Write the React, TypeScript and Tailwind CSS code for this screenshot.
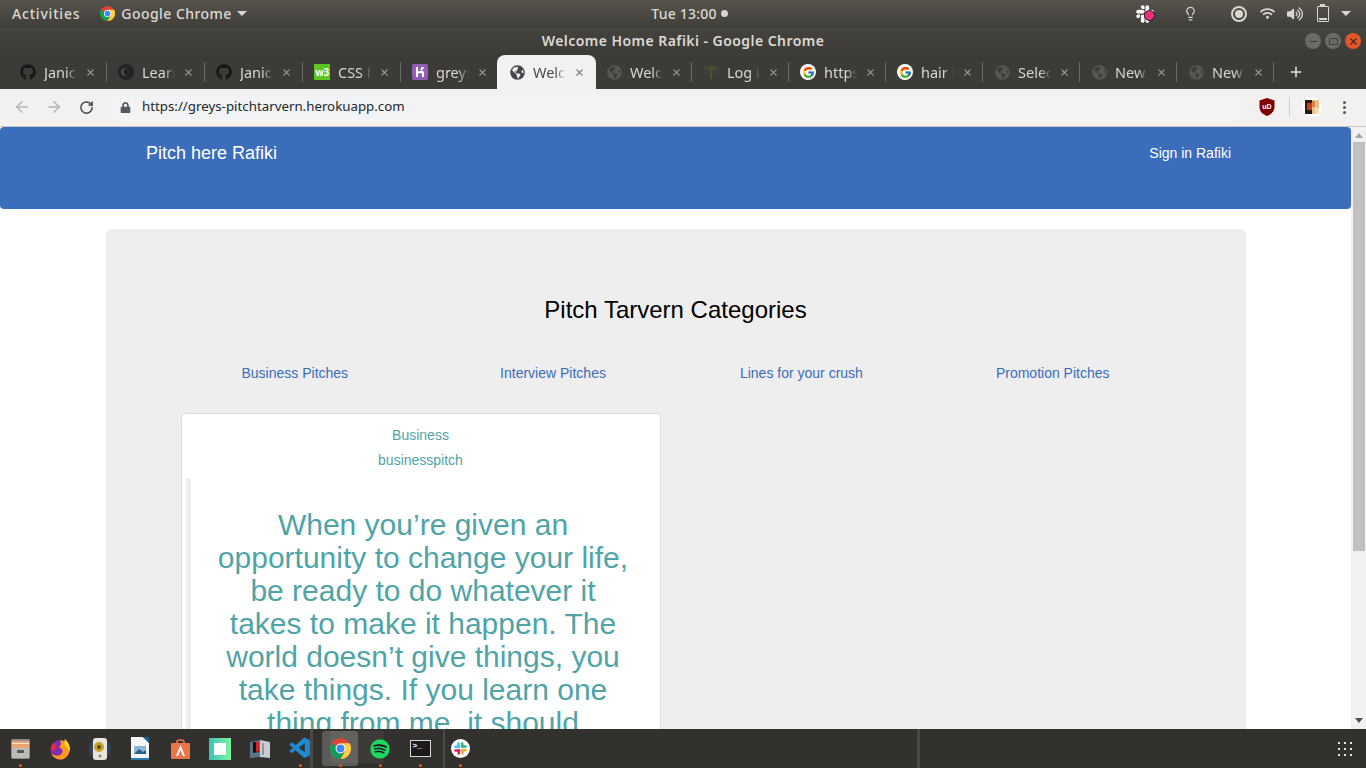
import { ArrowLeft, ArrowRight, RotateCw, X, Plus, Lightbulb, Minus } from "lucide-react";
import { FaGithub, FaGlobeAmericas, FaSpotify, FaSlack, FaLock, FaWifi, FaVolumeUp } from "react-icons/fa";
import { FcGoogle } from "react-icons/fc";
import { VscVscode } from "react-icons/vsc";
import type { ReactNode } from "react";

const ubuntu = "[font-family:'Noto_Sans','Open_Sans',sans-serif]";

function ChromeLogo({ size = 16 }: { size?: number }) {
  return (
    <svg width={size} height={size} viewBox="0 0 32 32">
      <circle cx="16" cy="16" r="16" fill="#db4437" />
      <path d="M16 16 L2.14 8 A16 16 0 0 0 16 32 L22 22 Z" fill="#0f9d58" />
      <path d="M16 8 H29.9 A16 16 0 0 1 16 32 L22.9 20 Z" fill="#ffcd40" />
      <circle cx="16" cy="16" r="7.6" fill="#fff" />
      <circle cx="16" cy="16" r="6" fill="#4285f4" />
    </svg>
  );
}

function GoogleBadge() {
  return (
    <span className="flex h-4 w-4 items-center justify-center rounded-full bg-white">
      <FcGoogle size={13} />
    </span>
  );
}

function LearnIcon() {
  return (
    <svg width="16" height="16" viewBox="0 0 16 16">
      <circle cx="8" cy="8" r="8" fill="#242424" />
      <circle cx="7" cy="8" r="4" fill="#4a4a48" />
      <circle cx="9" cy="8" r="3.4" fill="#242424" />
    </svg>
  );
}

function W3Icon() {
  return (
    <span className="flex h-4 w-4 items-center justify-center bg-[#5ec422] text-[10px] font-bold leading-none tracking-tighter text-white">
      w3
    </span>
  );
}

function HerokuIcon() {
  return (
    <svg width="16" height="16" viewBox="0 0 16 16">
      <rect width="16" height="16" rx="2" fill="#8e5fb5" />
      <path d="M4 3h2v4.500c2-.8 6-1.600 6 1.500v4h-2V9.500c0-1-2-.7-4 .2V13H4Z" fill="#fff" />
      <path d="M9.500 3h2.500c0 1.200-.8 2.200-2.200 3.200H8c.8-1 1.400-2 1.500-3.200Z" fill="#fff" />
    </svg>
  );
}

function PalmIcon() {
  return (
    <svg width="16" height="16" viewBox="0 0 16 16" fill="none" stroke="#4d5233" strokeWidth="1.6">
      <path d="M8 5v11" />
      <path d="M8 5C6 2 3 3 1 5M8 5c2-3 5-2 7 0M8 5C6 5 4 7 3 9M8 5c2 0 4 2 5 4M8 5V1" />
    </svg>
  );
}

const dimGlobe = <FaGlobeAmericas size={15} className="text-[#565654]" />;

const tabs: { title: string; icon: ReactNode; w: string; active?: boolean; noSep?: boolean }[] = [
  { title: "Janice Greys", icon: <FaGithub size={16} className="text-[#161616]" />, w: "w-[98px]" },
  { title: "Learn CSS", icon: <LearnIcon />, w: "w-[98px]" },
  { title: "Janice Greys", icon: <FaGithub size={16} className="text-[#161616]" />, w: "w-[98px]" },
  { title: "CSS background", icon: <W3Icon />, w: "w-[98px]" },
  { title: "greys-pitch", icon: <HerokuIcon />, w: "w-[97px]", noSep: true },
  { title: "Welcome Home", icon: <FaGlobeAmericas size={15} className="text-[#45494e]" />, w: "w-[99px]", active: true, noSep: true },
  { title: "Welcome Home", icon: dimGlobe, w: "w-[97px]" },
  { title: "Log in", icon: <PalmIcon />, w: "w-[97px]" },
  { title: "https://", icon: <GoogleBadge />, w: "w-[97px]" },
  { title: "hair bun", icon: <GoogleBadge />, w: "w-[97px]" },
  { title: "Select", icon: dimGlobe, w: "w-[97px]" },
  { title: "New Tab", icon: dimGlobe, w: "w-[97px]" },
  { title: "New Tab", icon: dimGlobe, w: "w-[97px]" },
];

function Tab({ title, icon, w, active, noSep }: (typeof tabs)[number]) {
  return (
    <div
      className={`flex h-full shrink-0 items-center ${w} ${
        active ? "-ml-[2px] rounded-t-[8px] bg-[#f2f2f2] pl-[12px] text-[#45494e]" : "pl-[10px] text-[#d8d6cf]"
      }`}
    >
      <span className="flex h-4 w-4 shrink-0 items-center justify-center">{icon}</span>
      <span className="ml-2 w-[36px] overflow-hidden whitespace-nowrap pb-[1px] text-[14.5px] leading-[18px] [mask-image:linear-gradient(90deg,#000_62%,transparent_92%)]">
        {title}
      </span>
      <X size={11} strokeWidth={2.2} className={`ml-[5px] shrink-0 ${active ? "text-[#55585c]" : "text-[#b5b3ad]"}`} />
      {!noSep && <span className="ml-auto mr-[1px] h-5 w-px bg-[#6d6c67]" />}
    </div>
  );
}

function TopBar() {
  return (
    <div className={`grid h-[27px] shrink-0 grid-cols-[1fr_auto_1fr] items-center bg-gradient-to-b from-[#57544e] to-[#403e39] text-[14px] font-medium text-[#dcd9d2] ${ubuntu}`}>
      <div className="flex items-center pl-3">
        <span className="tracking-[0.8px]">Activities</span>
        <span className="ml-5 mr-[6px]">
          <ChromeLogo size={15} />
        </span>
        <span className="tracking-[0.45px]">Google Chrome</span>
        <span className="ml-[5px] h-0 w-0 border-x-[5px] border-t-[5px] border-x-transparent border-t-[#d8d6cf]" />
      </div>
      <div className="flex items-center pl-[13px]">
        <span className="tracking-[0.2px]">Tue 13:00</span>
        <span className="ml-[4px] h-[7px] w-[7px] rounded-full bg-[#d8d6cf]" />
      </div>
      <div className="flex items-center justify-end pr-[15px] text-[#d8d6cf]">
        <span className="relative mr-[28px] flex h-5 w-5 items-center justify-center">
          <FaSlack size={20} className="text-white" />
          <span className="absolute left-[9px] top-[6px] h-[11px] w-[11px] rounded-full border border-[#1e1e1e] bg-[#ec2f78]" />
        </span>
        <Lightbulb size={15} className="mr-[33px]" />
        <span className="mr-[13px] flex h-4 w-4 items-center justify-center rounded-full border-2 border-[#d8d6cf]">
          <span className="h-[8px] w-[8px] rounded-full bg-[#d8d6cf]" />
        </span>
        <FaWifi size={15} className="mr-[12px]" />
        <FaVolumeUp size={16} className="mr-[14px]" />
        <span className="relative mr-[12px] h-[16px] w-[12px] rounded-[1px] border-[1.5px] border-[#d8d6cf]">
          <span className="absolute -top-[3px] left-[2px] h-[2px] w-[5px] bg-[#d8d6cf]" />
          <span className="absolute bottom-[1px] left-[1px] right-[1px] h-[2px] bg-[#d8d6cf]" />
        </span>
        <span className="h-0 w-0 border-x-[5px] border-t-[5px] border-x-transparent border-t-[#d8d6cf]" />
      </div>
    </div>
  );
}

function TitleBar() {
  return (
    <div className={`grid h-[28px] shrink-0 grid-cols-[1fr_auto_1fr] items-center bg-gradient-to-b from-[#45433e] to-[#3c3b37] text-[14px] font-semibold tracking-[0.45px] text-[#dcd9d2] ${ubuntu}`}>
      <div />
      <div className="pb-[2px]">Welcome Home Rafiki - Google Chrome</div>
      <div className="flex items-center justify-end gap-1 pr-[5px]">
        <span className="flex h-4 w-4 items-center justify-center rounded-full bg-[#6b6a65] text-[#3c3b37]">
          <Minus size={11} strokeWidth={2.5} />
        </span>
        <span className="flex h-4 w-4 items-center justify-center rounded-full bg-[#6b6a65]">
          <span className="h-[7px] w-[9px] rounded-[1px] border border-[#3c3b37]" />
        </span>
        <span className="flex h-4 w-4 items-center justify-center rounded-full bg-[#e2562a] text-[#43281c]">
          <X size={11} strokeWidth={2.5} />
        </span>
      </div>
    </div>
  );
}

function TabStrip() {
  return (
    <div className={`flex h-[34px] shrink-0 items-center bg-[#3c3b37] pl-[10px] ${ubuntu}`}>
      {tabs.map((t, i) => (
        <Tab key={i} {...t} />
      ))}
      <Plus size={16} strokeWidth={2.2} className="ml-[13px] text-[#e8e6df]" />
    </div>
  );
}

function Toolbar() {
  return (
    <div className="flex h-[38px] shrink-0 items-center border-b border-[#c8c7c4] bg-[#f2f1f0] pb-[1px] pl-[13px]">
      <ArrowLeft size={18} className="text-[#b4b4b4]" />
      <ArrowRight size={18} className="ml-[14px] text-[#b4b4b4]" />
      <RotateCw size={15} strokeWidth={2.4} className="ml-[16px] text-[#4a4a4a]" />
      <div className="ml-[14px] flex h-7 w-[1137px] items-center rounded-full bg-[#f1f3f4] pl-[12px]">
        <FaLock size={11} className="text-[#55585c]" />
        <span className={`ml-[11px] text-[13.3px] text-[#24262a] ${ubuntu}`}>https://greys-pitchtarvern.herokuapp.com</span>
      </div>
      <svg width="16" height="18" viewBox="0 0 16 18" className="ml-[14px]">
        <path d="M8 0 L15.500 2.500 V9 C15.500 13.500 12 16.500 8 18 C4 16.500 .5 13.500 .5 9 V2.500 Z" fill="#800000" />
        <text x="8" y="11" textAnchor="middle" fontSize="7" fontWeight="700" fill="#fff" fontFamily="Liberation Sans">uD</text>
      </svg>
      <span className="ml-[14px] h-5 w-px bg-[#d0cfcc]" />
      <span className="ml-[12px] flex h-5 w-5 items-center justify-center rounded-full bg-white">
        <svg width="14" height="14" viewBox="0 0 14 14">
          <rect width="14" height="14" fill="#e9c08e" />
          <rect width="7" height="14" fill="#2a1710" />
          <rect x="2" y="3" width="5" height="7" fill="#b5442a" />
          <rect x="7" y="1" width="3" height="6" fill="#d9893f" />
          <rect x="10" y="8" width="4" height="6" fill="#f1dcc0" />
        </svg>
      </span>
      <span className="ml-[21px] flex flex-col gap-[2px]">
        <span className="h-[3px] w-[3px] rounded-full bg-[#55585c]" />
        <span className="h-[3px] w-[3px] rounded-full bg-[#55585c]" />
        <span className="h-[3px] w-[3px] rounded-full bg-[#55585c]" />
      </span>
    </div>
  );
}

function Scrollbar() {
  return (
    <div className="flex w-[15px] shrink-0 flex-col items-center bg-[#f1f1f1]">
      <span className="mt-[6px] h-0 w-0 border-x-[4px] border-b-[5px] border-x-transparent border-b-[#a3a3a3]" />
      <span className="mt-[4px] h-[409px] w-[12px] bg-[#c1c1c1]" />
      <span className="mt-auto mb-[6px] h-0 w-0 border-x-[4px] border-t-[5px] border-x-transparent border-t-[#505050]" />
    </div>
  );
}

function Page() {
  return (
    <div className="flex min-h-0 flex-1 overflow-hidden bg-white [font-family:'Liberation_Sans',Arial,sans-serif]">
      <div className="min-w-0 flex-1">
        <nav className="flex h-[82px] justify-between rounded-[4px] bg-[#3b6dba] pl-[146px] pr-[120px] pt-[15px] text-white">
          <a className="text-[18px] leading-[22px]">Pitch here Rafiki</a>
          <a className="text-[14px] leading-[22px]">Sign in Rafiki</a>
        </nav>
        <div className="mx-auto mt-5 w-[1140px] rounded-[6px] bg-[#eeeeee] pt-[67px]">
          <h2 className="text-center text-[24px] leading-7 text-black">Pitch Tarvern Categories</h2>
          <div className="mt-[39px] flex pl-[136px] text-[14px] leading-5 text-[#3b6dba]">
            <a>Business Pitches</a>
            <a className="ml-[152px]">Interview Pitches</a>
            <a className="ml-[134px]">Lines for your crush</a>
            <a className="ml-[133px]">Promotion Pitches</a>
          </div>
          <div className="ml-[75px] mt-[30px] min-h-[400px] w-[480px] rounded-[4px] border border-[#dddddd] bg-white pt-[11px] text-center text-[#4fa4a6]">
            <p className="text-[14px] leading-5">Business</p>
            <p className="mt-[5px] text-[14px] leading-5">businesspitch</p>
            <blockquote className="ml-1 mr-[5px] mt-2 border-l-[5px] border-[#eeeeee] pb-2 pl-[25px] pr-6 pt-[30px]">
              <p className="text-[30px] leading-[33px]">
                When you’re given an opportunity to change your life, be ready to do whatever it takes to make it happen. The world doesn’t give things, you take things. If you learn one thing from me, it should
              </p>
            </blockquote>
          </div>
        </div>
      </div>
      <Scrollbar />
    </div>
  );
}

function DockItem({ children, dot, active }: { children: ReactNode; dot?: boolean; active?: boolean }) {
  return (
    <div className="relative flex h-full w-10 shrink-0 items-center justify-center">
      {active && <span className="absolute inset-y-[2px] left-[2px] right-[2px] rounded-[3px] bg-white/20" />}
      <span className="relative flex h-[26px] w-[26px] items-center justify-center">{children}</span>
      {dot && <span className="absolute bottom-[1px] h-[3px] w-[3px] rounded-full bg-[#e9541f]" />}
    </div>
  );
}

function Dock() {
  return (
    <div className="relative flex h-[39px] shrink-0 items-center bg-[#32312d]">
      {/* ghost of a window preview behind the chrome and spotify icons */}
      <span className="absolute left-[330px] top-[2px] h-[32px] w-[54px] bg-white/5" />
      <span className="absolute left-[310px] top-0 h-full w-[3px] bg-[#4a4945]" />
      <span className="absolute left-[443px] top-0 h-full w-[2px] bg-[#4a4945]" />
      <DockItem dot>
        <svg width="19" height="20" viewBox="0 0 19 20">
          <rect x="0" y="0" width="19" height="20" rx="2" fill="#8d8b86" />
          <rect x="1" y="2" width="17" height="7" fill="#e9a578" />
          <rect x="1" y="4" width="17" height="1" fill="#f7e6c6" />
          <rect x="1" y="9" width="17" height="10" fill="#bdbbb5" />
          <rect x="6" y="11" width="7" height="3" rx="1" fill="#55534f" />
        </svg>
      </DockItem>
      <DockItem>
        <svg width="22" height="22" viewBox="0 0 24 24">
          <circle cx="12" cy="13" r="10.500" fill="#7b2fb5" />
          <path d="M12 2.500 C19 3 23 8 22.500 13 C22 19 17.500 23.500 12 23.500 C8 23.500 4 21 2.500 17 C6 20 11 20 13.500 17.500 C16 15 15 11 11 10.500 C13 8 13.500 5 12 2.500Z" fill="#ff9a1f" />
          <path d="M17 1 C21 4 24 9 22.500 15 C21 11 19 9 17 8 Z" fill="#ffd52e" />
          <path d="M2 12 C2 9 4 6 6 5 C6 7 7 8 9 9 C7 10 6 12 7 14 C5 15 3 14 2 12Z" fill="#e6254a" />
        </svg>
      </DockItem>
      <DockItem>
        <svg width="22" height="22" viewBox="0 0 22 22">
          <circle cx="11" cy="11" r="11" fill="#2f4356" />
          <rect x="4" y="0" width="14" height="22" rx="3" fill="#e8e6dc" />
          <circle cx="10" cy="9" r="5" fill="#c9a227" />
          <circle cx="10" cy="9" r="2" fill="#57480d" />
          <circle cx="11" cy="18" r="1.500" fill="#8b8970" />
        </svg>
      </DockItem>
      <DockItem>
        <svg width="18" height="23" viewBox="0 0 18 23">
          <path d="M0 0 H12 L18 6 V23 H0 Z" fill="#f4f7f9" />
          <path d="M12 0 L18 0 V6 Z" fill="#1c5f92" />
          <rect x="3" y="9" width="12" height="8" fill="#8fb8d6" />
          <path d="M3 17 L8 12 L12 15 L15 13 V17Z" fill="#285f88" />
          <rect x="0" y="21" width="18" height="2" fill="#2a7ab0" />
        </svg>
      </DockItem>
      <DockItem>
        <svg width="19" height="20" viewBox="0 0 19 20">
          <path d="M6 4 V2.500 C6 .5 13 .5 13 2.500 V4" fill="none" stroke="#e9754c" strokeWidth="1.600" />
          <rect x="0" y="4" width="19" height="16" rx="1" fill="#e9754c" />
          <path d="M9.500 6 L14 17 H12 L9.500 11 L7 17 H5 Z" fill="#fff" />
        </svg>
      </DockItem>
      <DockItem>
        <span className="flex h-[22px] w-[22px] items-center justify-center bg-gradient-to-r from-[#35c4b4] to-[#7ef2a0]">
          <span className="h-3 w-3 bg-white" />
        </span>
      </DockItem>
      <DockItem>
        <svg width="20" height="18" viewBox="0 0 20 18">
          <path d="M0 2 L10 0 V17 L0 18 Z" fill="#5a7488" />
          <path d="M3 2 H9 V12 L3 13 Z" fill="#111" />
          <path d="M6 2 H9 V11 L6 12 Z" fill="#d2232a" />
          <path d="M10 0 L20 2 V18 L10 17 Z" fill="#c9cdd2" />
          <path d="M12 3 L14 3.500 V15 L12 15Z" fill="#8b97a3" />
        </svg>
      </DockItem>
      <DockItem dot>
        <VscVscode size={25} className="text-[#1f8ad2]" />
      </DockItem>
      <DockItem dot active>
        <ChromeLogo size={21} />
      </DockItem>
      <DockItem dot>
        <span className="flex h-[20px] w-[20px] items-center justify-center rounded-full bg-[#1ed760]">
          <FaSpotify size={20} className="rounded-full bg-[#1b1b1b] text-[#1ed760]" />
        </span>
      </DockItem>
      <DockItem dot>
        <span className="flex h-[17px] w-[21px] items-start border border-[#d8d8d8] bg-[#1a1a1a] pl-[2px] font-mono text-[8px] font-bold leading-[10px] text-white">
          &gt;_
        </span>
      </DockItem>
      <DockItem dot>
        <span className="flex h-[19px] w-[19px] items-center justify-center rounded-full bg-white">
          <svg width="13" height="13" viewBox="0 0 13 13" strokeWidth="2.600" strokeLinecap="round">
            <path d="M4.500 1.500 V5" stroke="#36c5f0" />
            <path d="M1.500 4.800 H4.500" stroke="#36c5f0" />
            <path d="M11.500 4.500 H8" stroke="#2eb67d" />
            <path d="M8.200 1.500 V4.500" stroke="#2eb67d" />
            <path d="M8.500 11.500 V8" stroke="#ecb22e" />
            <path d="M11.500 8.200 H8.500" stroke="#ecb22e" />
            <path d="M1.500 8.500 H5" stroke="#e01e5a" />
            <path d="M4.800 11.500 V8.500" stroke="#e01e5a" />
          </svg>
        </span>
      </DockItem>
      <span className="ml-[437px] h-full w-[3px] bg-[#484744]" />
      <div className="ml-auto mr-[14px] grid grid-cols-3 gap-[4px]">
        {Array.from({ length: 9 }).map((_, i) => (
          <span key={i} className="h-[2px] w-[2px] bg-[#e2e2e2]" />
        ))}
      </div>
    </div>
  );
}

export default function App() {
  return (
    <div className="flex h-screen w-full flex-col overflow-hidden">
      <TopBar />
      <TitleBar />
      <TabStrip />
      <Toolbar />
      <Page />
      <Dock />
    </div>
  );
}
